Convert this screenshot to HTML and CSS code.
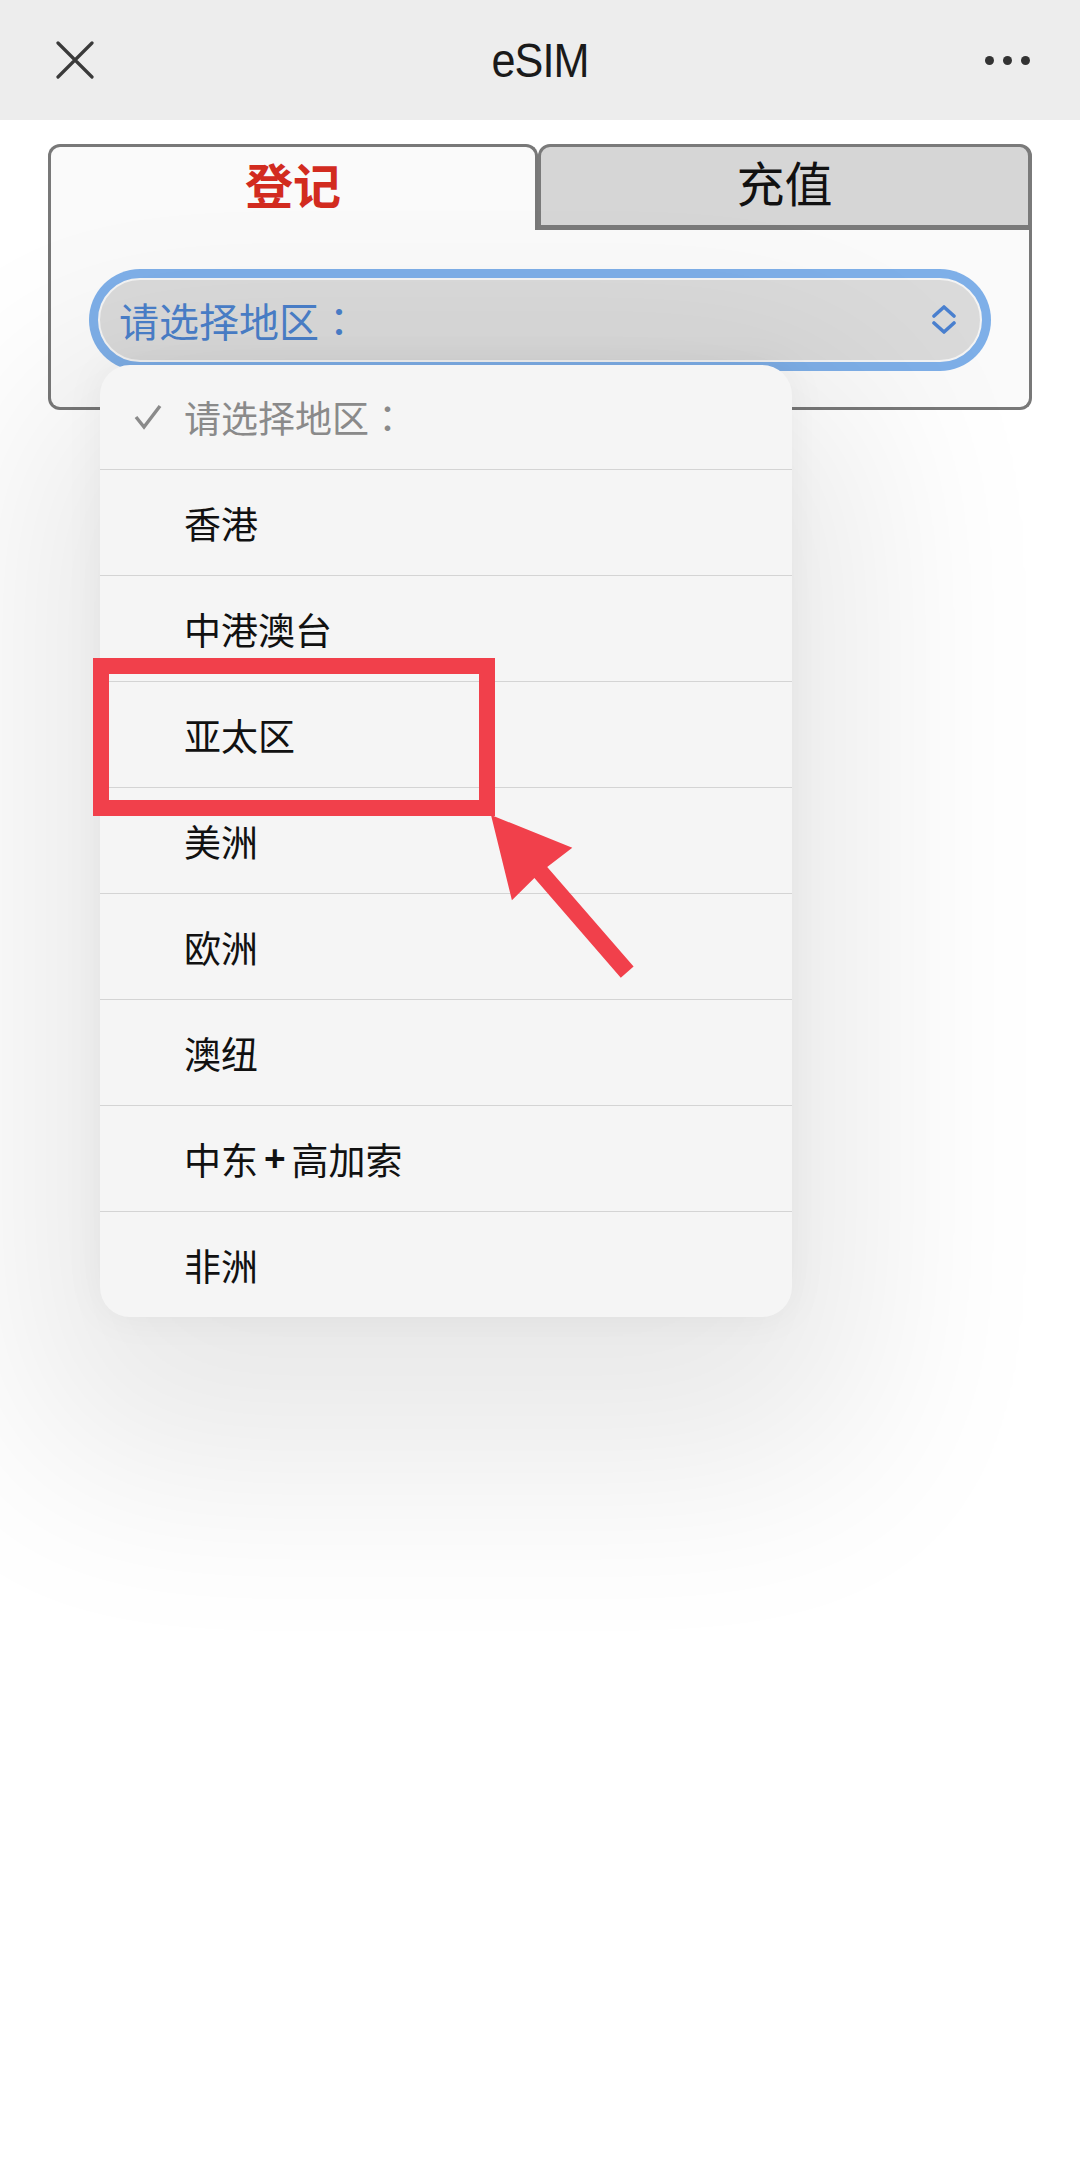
FILE: index.html
```html
<!DOCTYPE html>
<html>
<head>
    <meta charset="UTF-8">
    <title>eSIM</title>
    <link rel="stylesheet" href="styles.css">
</head>
<body>
    <div class="topbar">
        <svg class="close" width="38" height="38" viewBox="0 0 38 38">
            <path d="M2 2 L36 36 M36 2 L2 36" stroke="#3a3a3a" stroke-width="3.2" stroke-linecap="round"/>
        </svg>
        <div class="title">eSIM</div>
        <div class="more"><span></span><span></span><span></span></div>
    </div>

    <div class="page">
        <div class="tabs">
            <div class="tab active">登记</div>
            <div class="tab">充值</div>
        </div>
        <div class="panel">
            <div class="select">
                <span>请选择地区<span class="colon">：</span></span>
                <svg width="24" height="30" viewBox="0 0 24 30">
                    <path d="M2 11 L12 2 L22 11 M2 18 L12 27 L22 18" fill="none" stroke="#4a80cf" stroke-width="3.6" stroke-linecap="round" stroke-linejoin="round"/>
                </svg>
            </div>
        </div>
    </div>

    <!-- open picker -->
    <ul class="menu">
        <li class="placeholder">
            <span class="check">
                <svg width="28" height="26" viewBox="0 0 28 26"><path d="M2 13 L10 23 L26 2" fill="none" stroke="#8a8a8a" stroke-width="3.4"/></svg>
            </span>请选择地区<span class="colon">：</span>
        </li>
        <li><span class="check"></span>香港</li>
        <li><span class="check"></span>中港澳台</li>
        <li><span class="check"></span>亚太区</li>
        <li><span class="check"></span>美洲</li>
        <li><span class="check"></span>欧洲</li>
        <li><span class="check"></span>澳纽</li>
        <li><span class="check"></span>中东<span class="plus">+</span>高加索</li>
        <li><span class="check"></span>非洲</li>
    </ul>

    <!-- annotation -->
    <div class="mark"></div>
    <svg class="arrow" width="170" height="190" viewBox="0 0 170 190">
        <polygon points="11,15 92.3,47.8 67.2,66.9 153.6,166.6 140.8,177.8 54.4,78.1 31.9,100.2" fill="#f1404b"/>
    </svg>
</body>
</html>
```

FILE: styles.css
```css
body {
    margin: 0;
    background: #fff;
    font-family: "Noto Sans CJK SC", "Liberation Sans", sans-serif;
    width: 1080px;
    height: 2158px;
    position: relative;
    overflow: hidden;
}
.topbar {
    height: 120px;
    background: #ededed;
    display: grid;
    grid-template-columns: 1fr auto 1fr;
    align-items: center;
}
.close {
    margin-left: 56px;
}
.title {
    font-family: "Liberation Sans", Arial, sans-serif;
    font-size: 48px;
    letter-spacing: -1px;
    color: #1a1a1a;
    transform: scaleX(0.9);
}
.more {
    justify-self: end;
    margin-right: 50px;
    display: flex;
    gap: 9px;
}
.more span {
    width: 9px;
    height: 9px;
    border-radius: 50%;
    background: #333;
}
.page {
    padding: 24px 48px 0;
}
.tabs {
    display: flex;
    height: 86px;
}
.tab {
    box-sizing: border-box;
    display: flex;
    align-items: center;
    justify-content: center;
    font-size: 48px;
    color: #111;
    flex: 1;
    background: #d6d6d6;
    border: 3px solid #7a7a7a;
    border-right-width: 4px;
    border-bottom-width: 5px;
    border-radius: 12px 12px 0 0;
    padding-bottom: 10px;
}
.tab.active {
    flex: none;
    width: 490px;
    background: #fafafa;
    color: #d22b1f;
    font-weight: bold;
    border: 3px solid #787878;
    border-bottom: 0;
    padding-bottom: 12px;
}
.panel {
    box-sizing: border-box;
    height: 180px;
    background: #fafafa;
    border: 3px solid #787878;
    border-top: 0;
    border-radius: 0 0 12px 12px;
    padding: 48px 47px 0;
}
.select {
    box-sizing: border-box;
    height: 84px;
    border-radius: 42px;
    background: #dadada;
    border: 2px solid #f4f4f4;
    box-shadow: 0 0 0 9px #7eafe8;
    display: flex;
    align-items: center;
    justify-content: space-between;
    padding: 0 24px 0 19px;
    font-size: 40px;
    color: #4a7fc9;
}
.colon {
    font-family: "Noto Sans CJK TC", sans-serif;
}
.menu {
    position: absolute;
    top: 365px;
    left: 100px;
    width: 692px;
    margin: 0;
    padding: 0;
    list-style: none;
    background: #f5f5f5;
    border-radius: 30px;
    box-shadow: 0 80px 200px 70px rgba(0, 0, 0, 0.09), 0 0 40px rgba(0, 0, 0, 0.05);
}
.menu li {
    height: 105px;
    display: flex;
    align-items: center;
    padding-left: 34px;
    font-size: 37px;
    color: #111;
    border-top: 1px solid #d4d4d4;
}
.menu li:first-child {
    border-top: 0;
    height: 104px;
}
.menu li.placeholder {
    color: #8a8a8a;
}
.check {
    width: 50px;
    display: flex;
    align-items: center;
}
.plus {
    font-family: "Liberation Sans", sans-serif;
    font-weight: bold;
    padding: 0 6px;
}
.mark {
    position: absolute;
    left: 93px;
    top: 658px;
    width: 402px;
    height: 158px;
    box-sizing: border-box;
    border: 16px solid #f1404b;
}
.arrow {
    position: absolute;
    left: 480px;
    top: 800px;
}
```
